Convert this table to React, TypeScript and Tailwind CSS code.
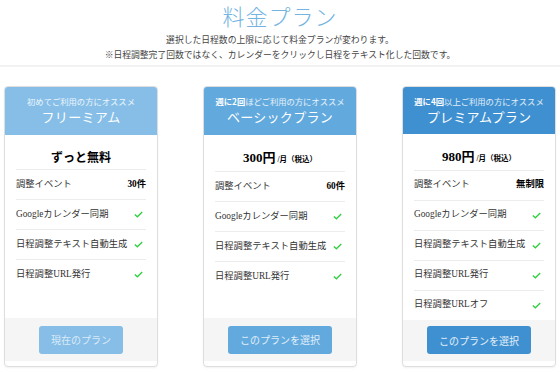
import React from "react";

const serif = { fontFamily: '"Liberation Serif", "Noto Sans CJK JP", serif' };
const sans = { fontFamily: '"Noto Sans CJK JP", "Noto Sans", sans-serif' };

type Plan = {
  lead: React.ReactNode;
  name: string;
  price: React.ReactNode;
  events: string;
  extras: string[];
  button: string;
  head: string;
  btn: string;
  btnWidth: string;
};

const features = ["Googleカレンダー同期", "日程調整テキスト自動生成", "日程調整URL発行"];

const plans: Plan[] = [
  {
    lead: "初めてご利用の方にオススメ",
    name: "フリーミアム",
    price: <span className="text-[12px] font-bold">ずっと無料</span>,
    events: "30件",
    extras: [],
    button: "現在のプラン",
    head: "bg-[#86bee7]",
    btn: "bg-[#86bee7] text-white/70",
    btnWidth: "w-[84px]",
  },
  {
    lead: (
      <>
        <b className="text-white">週に2回</b>ほどご利用の方にオススメ
      </>
    ),
    name: "ベーシックプラン",
    price: (
      <>
        <span className="text-[13px] font-bold">300円</span>
        <span className="text-[7.5px] font-bold"> /月（税込）</span>
      </>
    ),
    events: "60件",
    extras: [],
    button: "このプランを選択",
    head: "bg-[#62a9dd]",
    btn: "bg-[#62a9dd] text-white/80",
    btnWidth: "w-[104px]",
  },
  {
    lead: (
      <>
        <b className="text-white">週に4回</b>以上ご利用の方にオススメ
      </>
    ),
    name: "プレミアムプラン",
    price: (
      <>
        <span className="text-[13px] font-bold">980円</span>
        <span className="text-[7.5px] font-bold"> /月（税込）</span>
      </>
    ),
    events: "無制限",
    extras: ["日程調整URLオフ"],
    button: "このプランを選択",
    head: "bg-[#3f90d0]",
    btn: "bg-[#3f90d0] text-white/85",
    btnWidth: "w-[104px]",
  },
];

function Check() {
  return (
    <svg width="9" height="7" viewBox="0 0 9 7" className="mr-[3px]">
      <polyline points="0.8,3.4 3.4,5.8 8.2,1" fill="none" stroke="#2fcf3f" strokeWidth="1.3" />
    </svg>
  );
}

function Row({ label, children }: { label: string; children: React.ReactNode }) {
  return (
    <div className="h-[30px] flex items-center justify-between border-t border-[#ececec] text-[9.3px] text-[#333]">
      <span>{label}</span>
      {children}
    </div>
  );
}

function PlanCard({ plan }: { plan: Plan }) {
  return (
    <div className="w-[154px] h-[281px] flex flex-col bg-white border border-[#dedede] rounded-[4px] overflow-hidden pb-[5px] shadow-[0_1px_2px_rgba(0,0,0,0.06)]">
      <div className={`${plan.head} h-[48px] pt-[8px] text-center text-white`}>
        <div className="text-[8.3px] leading-[12px] text-white/85" style={sans}>{plan.lead}</div>
        <div className="mt-[1px] text-[13px] leading-[17px] tracking-[0.3px]" style={sans}>{plan.name}</div>
      </div>
      <div className="flex-1 px-[11px]">
        <div className="pt-[12px] pb-[1px] leading-[20px] text-center text-black">{plan.price}</div>
        <Row label="調整イベント">
          <span className="font-bold text-black">{plan.events}</span>
        </Row>
        {[...features, ...plan.extras].map((f) => (
          <Row key={f} label={f}>
            <Check />
          </Row>
        ))}
      </div>
      <div className="h-[43px] bg-[#f5f5f5] flex items-center justify-center">
        <div className={`${plan.btn} ${plan.btnWidth} h-[28px] rounded-[3px] flex items-center justify-center text-[10px]`} style={sans}>
          {plan.button}
        </div>
      </div>
    </div>
  );
}

export default function App() {
  return (
    <div className="w-[560px] h-[372px] overflow-hidden bg-white" style={serif}>
      <div className="text-center pt-[2px]" style={sans}>
        <h1 className="text-[22px] leading-[26px] font-light tracking-[1px] text-[#73b4e1]">料金プラン</h1>
        <p className="mt-[4px] text-[8.8px] leading-[15px] text-[#444]">
          選択した日程数の上限に応じて料金プランが変わります。
          <br />
          ※日程調整完了回数ではなく、カレンダーをクリックし日程をテキスト化した回数です。
        </p>
      </div>
      <div className="mt-[3px] h-[2px] bg-[#f2f2f2]" />
      <div className="flex gap-[45px] pl-[4px] pt-[19px]">
        {plans.map((p) => (
          <PlanCard key={p.name} plan={p} />
        ))}
      </div>
    </div>
  );
}
